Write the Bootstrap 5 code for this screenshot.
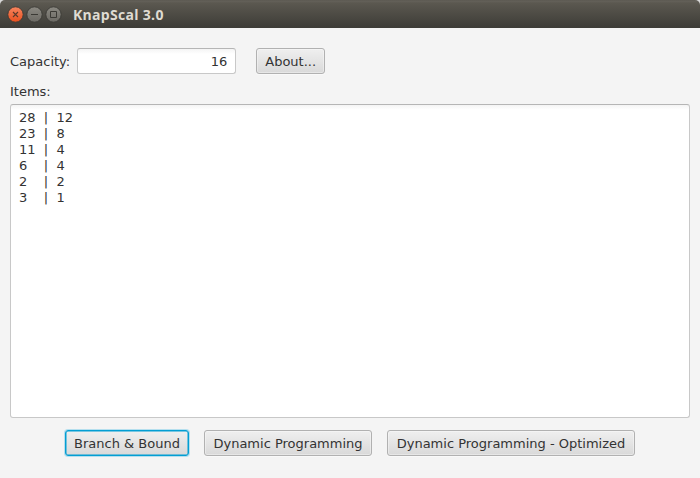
<!DOCTYPE html>
<html lang="en">
<head>
<meta charset="utf-8">
<meta name="viewport" content="width=device-width, initial-scale=1">
<title>KnapScal 3.0</title>
<link href="https://cdn.jsdelivr.net/npm/bootstrap@5.3.0/dist/css/bootstrap.min.css" rel="stylesheet">
<style>
body{font:13px/16px "DejaVu Sans",sans-serif;color:#333;background:#f4f4f4}
.app-window{height:478px}
.title-bar{height:28px;padding-left:7px;background:linear-gradient(#59564e 0,#64615a 1px,#5b5850 3px,#3e3d38 27px);border-radius:5px 5px 0 0}
.title-wrap{background:#d9d9d9}
.title-text{font:bold 14px/18px "Open Sans","Noto Sans",sans-serif;letter-spacing:.3px;color:#dfdbd2;margin-left:11px;padding-top:1px}
.win-buttons{gap:2px;padding-top:1px}
.content-area{padding:20px 10px 21px}
.top-row{height:26px}
.top-row label{padding-top:2px}
.fx-btn{--bs-btn-font-size:13px;--bs-btn-color:#333;--bs-btn-line-height:16px;height:26px;padding:5px 8px 3px;border:1px solid #b1b1b1;border-radius:3px;background:linear-gradient(#efefef,#d9d9d9);box-shadow:inset 0 0 0 1px rgba(255,255,255,.35),0 1px 0 #f9f9f9;white-space:nowrap}
.fx-btn.focused{border-color:#039ed3;box-shadow:inset 0 0 0 .5px #039ed3,0 0 0 1px #b5dfee}
.fx-input.form-control{width:159px;height:26px;margin-left:7px;padding:4px 8px;font-size:13px;line-height:16px;color:#333;border:1px solid #c8c8c8;border-top-color:#b5b5b5;border-radius:3px;background:linear-gradient(#f4f4f4,#fff 5px)}
.about-btn{margin-left:20px}
.items-label{margin:10px 0 4px}
.fx-area.form-control{height:314px;padding:5px 8px;font-size:13px;line-height:16px;color:#333;resize:none;border:1px solid #c8c8c8;border-top-color:#b5b5b5;border-radius:3px;background:linear-gradient(#f4f4f4,#fff 5px);box-shadow:none}
.action-row{gap:15px;margin-top:12px}
.w-branch{width:124px}
.w-dynamic{width:168px}
.w-optimized{width:248px}
</style>
<script src="https://cdn.jsdelivr.net/npm/bootstrap@5.3.0/dist/js/bootstrap.bundle.min.js"></script>
</head>
<body>
<div class="app-window d-flex flex-column overflow-hidden">
  <div class="title-wrap">
    <header class="title-bar d-flex align-items-center">
      <div class="win-buttons d-flex">
        <svg width="17" height="17" viewBox="0 0 17 17"><defs><linearGradient id="o" x2="0" y2="1"><stop stop-color="#f7855f"/><stop offset="1" stop-color="#e9501e"/></linearGradient><linearGradient id="g" x2="0" y2="1"><stop stop-color="#8b8982"/><stop offset="1" stop-color="#6b6963"/></linearGradient></defs><circle cx="8.5" cy="8.5" r="7.7" fill="url(#o)" stroke="#3b3a35" stroke-width=".9"/><path d="M6 6l5 5M11 6l-5 5" stroke="#5b3a2b" stroke-width="1.1"/></svg>
        <svg width="17" height="17" viewBox="0 0 17 17"><circle cx="8.5" cy="8.5" r="7.7" fill="url(#g)" stroke="#3b3a35" stroke-width=".9"/><path d="M5 8.5h7" stroke="#3b3a35"/></svg>
        <svg width="17" height="17" viewBox="0 0 17 17"><circle cx="8.5" cy="8.5" r="7.7" fill="url(#g)" stroke="#3b3a35" stroke-width=".9"/><path d="M5.5 5.5h6v6h-6z" fill="none" stroke="#3b3a35"/></svg>
      </div>
      <div class="title-text">KnapScal 3.0</div>
    </header>
  </div>
  <main class="content-area flex-grow-1">
    <div class="top-row d-flex align-items-center">
      <label for="capacity">Capacity:</label>
      <input id="capacity" class="form-control fx-input text-end" type="text" value="16">
      <button type="button" class="btn fx-btn about-btn">About...</button>
    </div>
    <label for="items" class="items-label d-block">Items:</label>
    <textarea id="items" class="form-control fx-area" spellcheck="false">28  |  12
23  |  8
11  |  4
6    |  4
2    |  2
3    |  1</textarea>
    <div class="action-row d-flex justify-content-center">
      <button type="button" class="btn fx-btn focused w-branch">Branch &amp; Bound</button>
      <button type="button" class="btn fx-btn w-dynamic">Dynamic Programming</button>
      <button type="button" class="btn fx-btn w-optimized">Dynamic Programming - Optimized</button>
    </div>
  </main>
</div>
</body>
</html>
